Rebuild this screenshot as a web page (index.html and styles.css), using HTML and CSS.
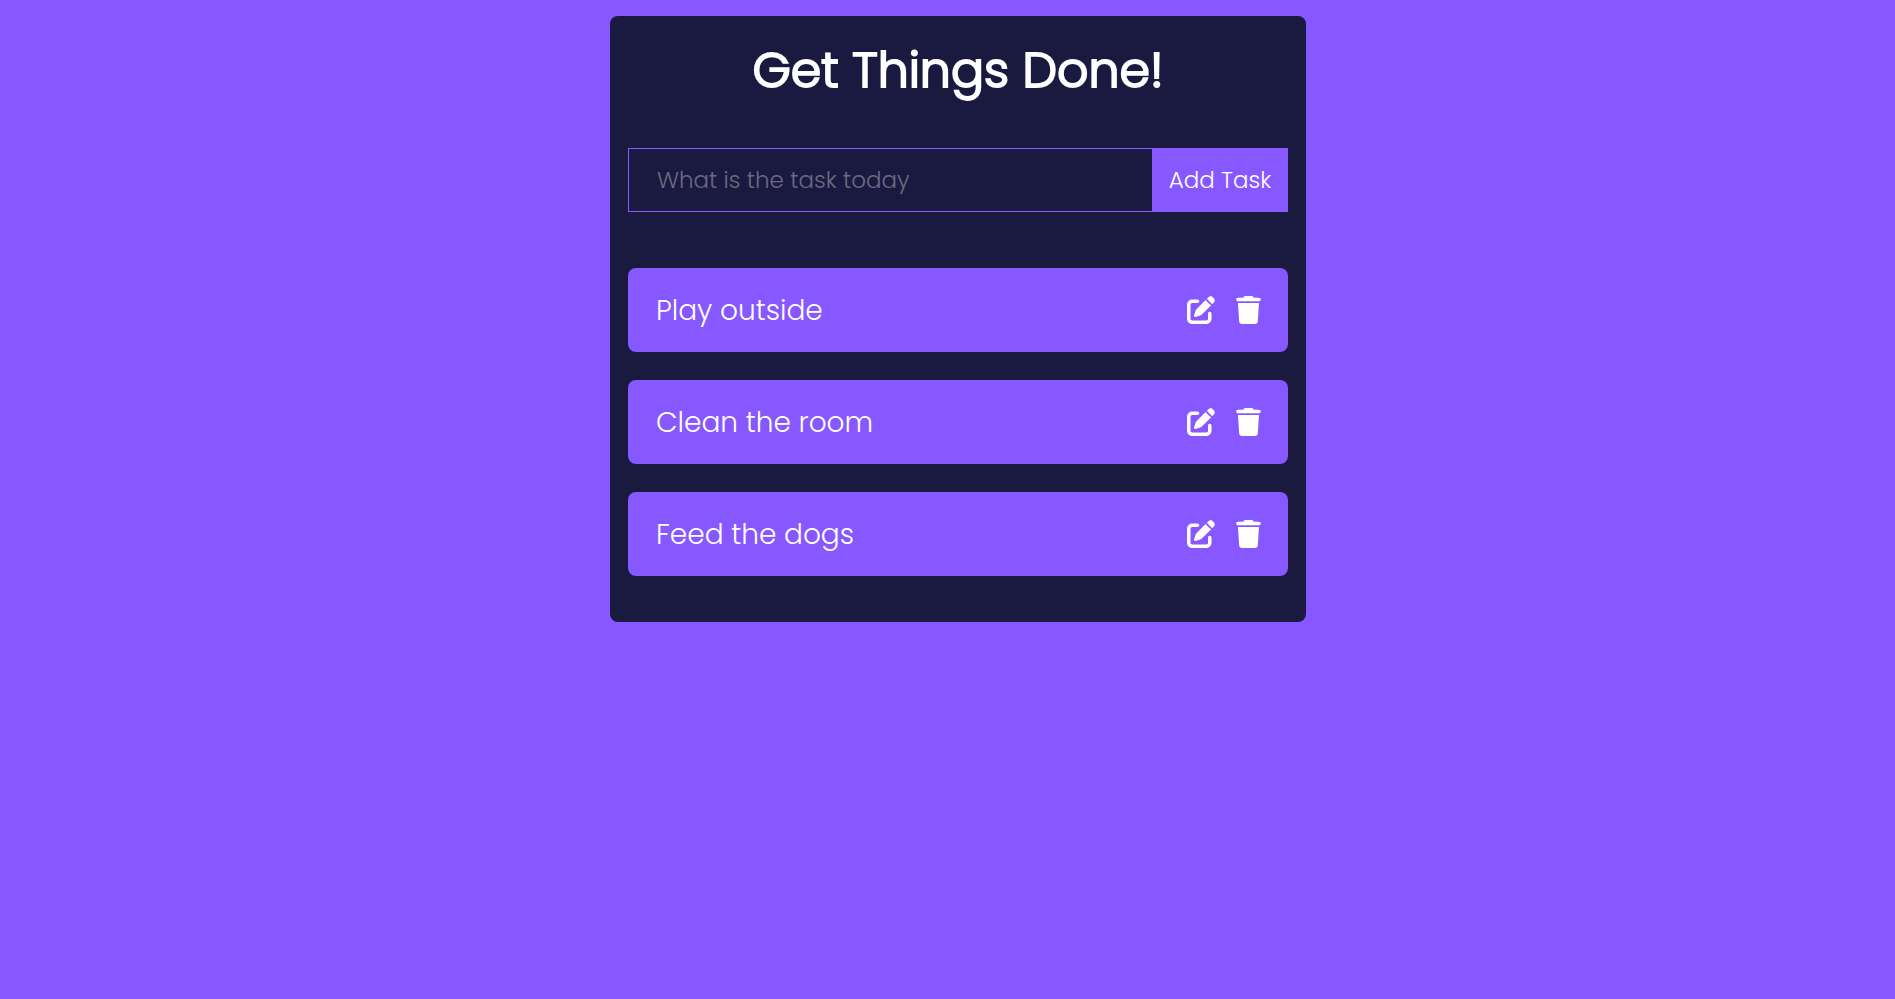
FILE: index.html
```html
<!DOCTYPE html>
<html lang="en">
<head>
<meta charset="utf-8">
<meta name="viewport" content="width=device-width, initial-scale=1">
<title>Get Things Done!</title>
<link rel="stylesheet" href="styles.css">
</head>
<body>
<svg class="sprite" aria-hidden="true">
  <symbol id="edit" viewBox="0 0 512 512"><path d="M490.3 40.4C512.2 62.27 512.2 97.73 490.3 119.6L460.3 149.7L362.3 51.72L392.4 21.66C414.3-.2135 449.7-.2135 471.6 21.66L490.3 40.4zM172.4 241.7L339.7 74.34L437.7 172.3L270.3 339.6C264.2 345.8 256.7 350.4 248.4 353.2L159.6 382.8C150.1 385.6 141.5 383.4 135 376.1C128.6 370.5 126.4 361 129.2 352.4L158.8 263.6C161.6 255.3 166.2 247.8 172.4 241.7V241.7zM192 63.1C209.7 63.1 224 78.33 224 95.1C224 113.7 209.7 127.1 192 127.1H96C78.33 127.1 64 142.3 64 159.1V416C64 433.7 78.33 448 96 448H352C369.7 448 384 433.7 384 416V319.1C384 302.3 398.3 287.1 416 287.1C433.7 287.1 448 302.3 448 319.1V416C448 469 405 512 352 512H96C42.98 512 0 469 0 416V159.1C0 106.1 42.98 63.1 96 63.1H192z"/></symbol>
  <symbol id="trash" viewBox="0 0 448 512"><path d="M135.2 17.7L128 32H32C14.3 32 0 46.3 0 64S14.3 96 32 96H416c17.7 0 32-14.3 32-32s-14.3-32-32-32H320l-7.2-14.3C307.4 6.8 296.3 0 284.2 0H163.8c-12.1 0-23.2 6.8-28.6 17.7zM416 128H32L53.2 467c1.6 25.3 22.6 45 47.9 45H346.9c25.3 0 46.3-19.7 47.9-45L416 128z"/></symbol>
</svg>
<main class="page">
  <section class="card">
    <h1 class="title">Get Things Done!</h1>
    <form class="task-form">
      <input class="task-input" type="text" placeholder="What is the task today" aria-label="Task">
      <button class="task-submit" type="submit">Add Task</button>
    </form>
    <ul class="tasks">
      <li class="task">
        <span class="task-name">Play outside</span>
        <button class="icon-button" type="button" aria-label="Edit Play outside"><svg class="icon icon-edit"><use href="#edit"/></svg></button>
        <button class="icon-button" type="button" aria-label="Delete Play outside"><svg class="icon icon-trash"><use href="#trash"/></svg></button>
      </li>
      <li class="task">
        <span class="task-name">Clean the room</span>
        <button class="icon-button" type="button" aria-label="Edit Clean the room"><svg class="icon icon-edit"><use href="#edit"/></svg></button>
        <button class="icon-button" type="button" aria-label="Delete Clean the room"><svg class="icon icon-trash"><use href="#trash"/></svg></button>
      </li>
      <li class="task">
        <span class="task-name">Feed the dogs</span>
        <button class="icon-button" type="button" aria-label="Edit Feed the dogs"><svg class="icon icon-edit"><use href="#edit"/></svg></button>
        <button class="icon-button" type="button" aria-label="Delete Feed the dogs"><svg class="icon icon-trash"><use href="#trash"/></svg></button>
      </li>
    </ul>
  </section>
</main>
</body>
</html>
```

FILE: styles.css
```css
* {
  box-sizing: border-box;
}

body {
  margin: 0;
  background: #8758ff;
  color: #fff;
  font-family: Poppins, Inter, "Open Sans", sans-serif;
  font-weight: 300;
}

.sprite {
  display: none;
}

.page {
  padding: 16px 0 16px 21px;
}

.card {
  max-width: 696px;
  margin: 0 auto;
  padding: 18px 18px 46px;
  border-radius: 8px;
  background: #1a1a40;
}

.title {
  margin: 0 0 42px;
  font-size: 49px;
  font-weight: 300;
  line-height: 72px;
  text-align: center;
  -webkit-text-stroke: 2px currentColor;
}

.task-form {
  display: flex;
  margin-bottom: 56px;
}

.task-input,
.task-submit {
  height: 64px;
  border: 1px solid #8758ff;
  border-radius: 0;
  font: inherit;
  font-size: 23px;
}

.task-input {
  flex: 1;
  min-width: 0;
  padding: 0 28px;
  border-right: 0;
  background: none;
  color: #fff;
  outline: none;
}

.task-input::placeholder {
  color: #6b6a82;
  opacity: 1;
}

.task-submit {
  width: 136px;
  padding: 0;
  background: #8758ff;
  color: #fff;
  cursor: pointer;
}

.tasks {
  display: grid;
  gap: 28px;
  margin: 0;
  padding: 0;
  list-style: none;
}

.task {
  display: flex;
  align-items: center;
  gap: 21px;
  min-height: 84px;
  padding: 0 27px 0 28px;
  border-radius: 8px;
  background: #8758ff;
}

.task-name {
  flex: 1;
  padding-top: 1px;
  font-size: 28px;
}

.icon-button {
  display: flex;
  padding: 0;
  border: 0;
  background: none;
  color: #fff;
  cursor: pointer;
}

.icon {
  height: 28px;
  fill: currentColor;
}

.icon-edit {
  width: 28px;
}

.icon-trash {
  width: 25px;
}
```
